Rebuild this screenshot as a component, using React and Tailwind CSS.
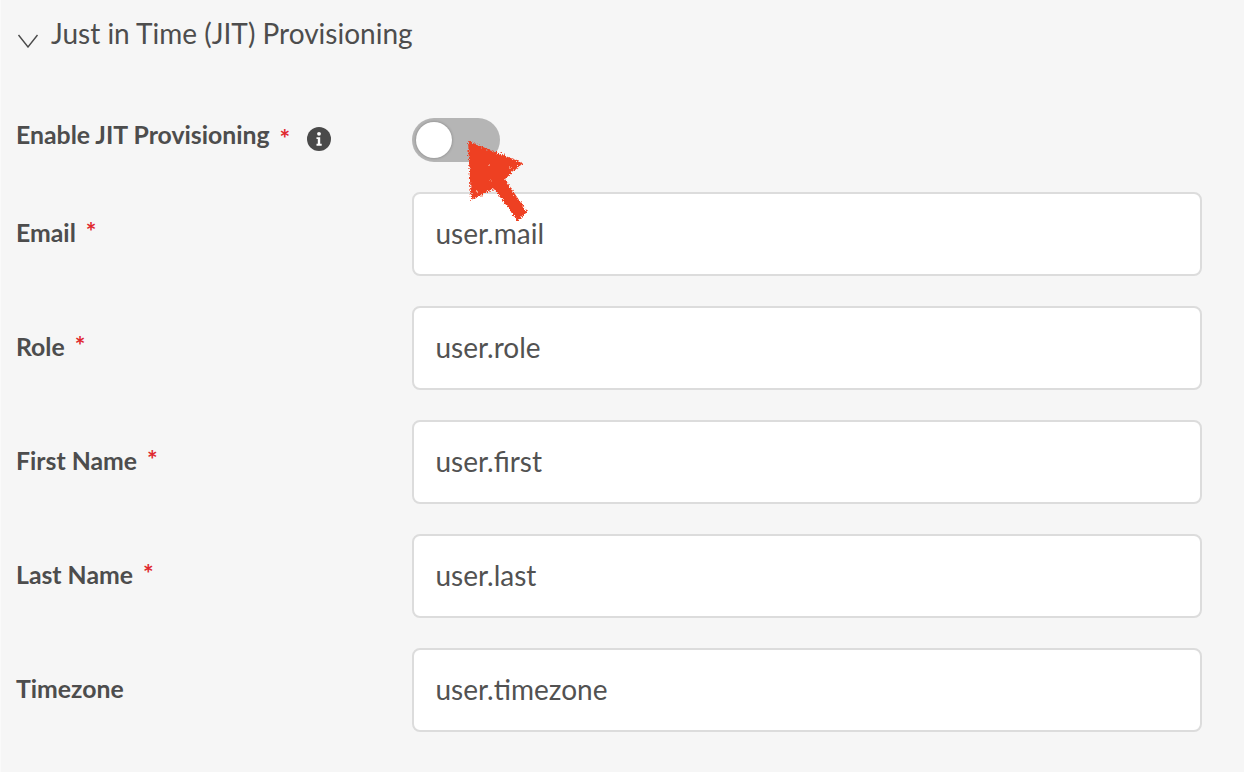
// App.jsx - JIT provisioning settings form
const fields = [
  { label: 'Email', value: 'user.mail', required: true },
  { label: 'Role', value: 'user.role', required: true },
  { label: 'First Name', value: 'user.first', required: true },
  { label: 'Last Name', value: 'user.last', required: true },
  { label: 'Timezone', value: 'user.timezone', required: false },
]

function Star() {
  return <span className="ml-[10px] text-[25px] leading-none font-bold text-[#e0282e] relative top-[4px]">*</span>
}

export default function App() {
  return (
    <div className="relative w-[1244px] h-[772px] overflow-hidden bg-[#f6f6f6] border-l border-[#fafafa] pl-[15px] pr-[42px] text-[#4d4d4d] font-['Lato',sans-serif]">
      {/* Section header */}
      <div className="flex items-center h-[34px] mt-[16px]">
        <svg className="w-[22px] h-[14px] ml-[1px] mt-[15px] text-[#4a4a4a]" viewBox="0 0 22 14" fill="none" stroke="currentColor" strokeWidth="1.4">
          <path d="M1.5 1l9.5 12 9.5-12" />
        </svg>
        <h2 className="ml-[12px] text-[28px] leading-[34px] font-normal">Just in Time (JIT) Provisioning</h2>
      </div>

      {/* Toggle row */}
      <div className="flex mt-[68px] h-[44px]">
        <div className="w-[396px] flex items-center text-[24.8px] font-bold -mt-[11px]">
          Enable JIT Provisioning
          <Star />
          <svg className="ml-[17px] mt-[9px] w-[24px] h-[24px]" viewBox="0 0 24 24">
            <circle cx="12" cy="12" r="12" fill="#4a4a4a" />
            <circle cx="12" cy="6.8" r="1.9" fill="#fff" />
            <path d="M9.5 10.2h3.7v6.6h1.5v1.9H9.5v-1.9h1.3v-4.7H9.5z" fill="#fff" />
          </svg>
        </div>
        <div className="w-[88px] h-[44px] rounded-full bg-[#b5b5b5] flex items-center pl-[4px]">
          <div className="w-[36px] h-[36px] rounded-full bg-white shadow-[0_0_3px_rgba(0,0,0,0.3)]" />
        </div>
      </div>

      {/* Attribute mapping fields */}
      <div className="mt-[30px] flex flex-col gap-[30px]">
        {fields.map((f) => (
          <div key={f.label} className="flex h-[84px]">
            <div className="w-[396px] pt-[23px] text-[24.8px] leading-[36px] font-bold flex items-start">
              {f.label}
              {f.required && <Star />}
            </div>
            <div className="flex-1 rounded-[8px] border-2 border-[#dcdcdc] bg-white flex items-center pl-[21.5px] pb-[2px] text-[28px] text-[#525252]">
              {f.value}
            </div>
          </div>
        ))}
      </div>

      {/* Hand-drawn arrow annotation */}
      <svg className="absolute left-[455px] top-[130px] w-[85px] h-[105px]" viewBox="455 130 85 105">
        <defs>
          <filter id="rough" x="-15%" y="-15%" width="130%" height="130%">
            <feTurbulence type="fractalNoise" baseFrequency="0.6" numOctaves="2" seed="7" />
            <feDisplacementMap in="SourceGraphic" scale="6" xChannelSelector="R" yChannelSelector="G" />
          </filter>
        </defs>
        <g filter="url(#rough)">
          <path fill="#ee4123" d="M467 141l55 22-18 16 22 33-9 9-24-32-23 11z" />
          <g fill="#f7a08a">
            <circle cx="487" cy="165" r="1" />
            <circle cx="476" cy="192" r="1.2" />
            <circle cx="509" cy="168" r="1" />
            <circle cx="481" cy="196" r="0.9" />
            <circle cx="490" cy="180" r="0.8" />
          </g>
        </g>
      </svg>
    </div>
  )
}
